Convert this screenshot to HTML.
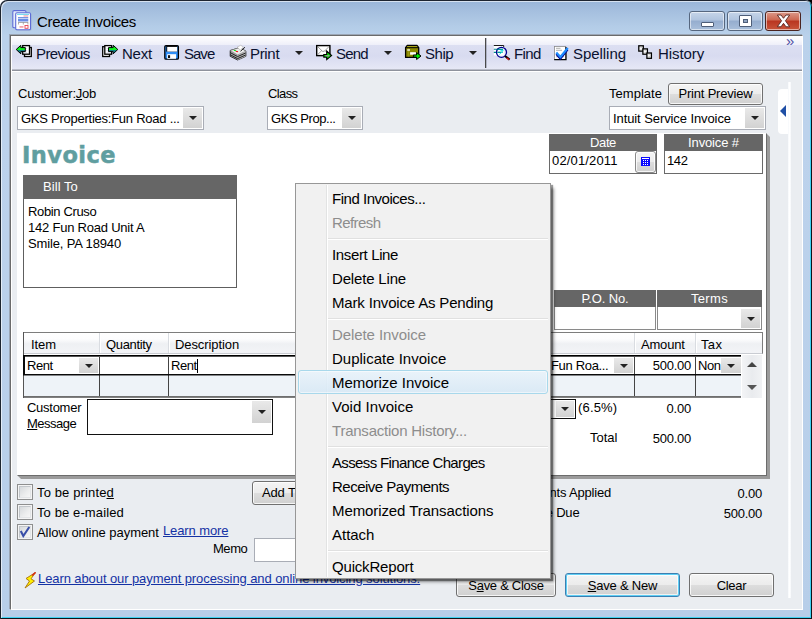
<!DOCTYPE html>
<html>
<head>
<meta charset="utf-8">
<title>Create Invoices</title>
<style>
html,body{margin:0;padding:0;}
body{width:812px;height:619px;overflow:hidden;position:relative;background:#fff;font-family:"Liberation Sans",sans-serif;font-size:13px;color:#000;}
.abs,.win *{position:absolute;box-sizing:border-box;}
.win{position:absolute;left:0;top:0;width:812px;height:619px;box-sizing:border-box;background:linear-gradient(to bottom,#98b5d8 0,#a6c0df 12px,#b3cce7 26px,#bad1eb 36px,#bcd2ec 130px,#b7cee9 100%);box-shadow:inset 1px 1px 0 0 #1d2530,inset -1px -1px 0 0 #10141a,inset 2px 2px 0 0 rgba(255,255,255,.6),inset -2px -2px 0 0 #3fd2f2;border-radius:7px 7px 0 0;overflow:hidden;}
.t{white-space:nowrap;line-height:16px;height:16px;font-size:13px;}
.n{font-size:13px;}
u{text-decoration:underline;}
.win u{position:static;}
/* title */
.title{left:37px;top:13px;font-size:15px;line-height:18px;color:#000;white-space:nowrap;}
.cap{top:11px;height:20px;border:1px solid #56677f;border-radius:3px;background:linear-gradient(to bottom,#c6d5e9 0,#b0c4de 45%,#95adce 50%,#a9bfdb 100%);box-shadow:inset 0 0 0 1px rgba(255,255,255,.55);}
.cap.close{background:linear-gradient(to bottom,#dc9a8a 0,#cc6650 45%,#b93520 50%,#c8553a 100%);border-color:#4a2420;}
/* client */
.client{left:10px;top:35px;width:793px;height:575px;background:#eaedf1;border:1px solid #6b6b6b;border-right-color:#fff;border-bottom-color:#fff;box-shadow:-1px -1px 0 #9ba6b5;}
.tb{left:0;top:0;width:791px;height:36px;background:linear-gradient(to bottom,#ffffff 0,#fafafd 3px,#eeeff9 9px,#dcdff2 9px,#d8dbf0 20px,#e6e8f6 33px,#8e929c 34px,#8e929c 35px,#fff 35px);}
.tbt{top:10px;font-size:15px;line-height:18px;color:#0a1230;white-space:nowrap;}
.tbi{top:9px;width:18px;height:18px;}
.dd{width:0;height:0;border-left:4px solid transparent;border-right:4px solid transparent;border-top:4px solid #222;}
/* combos */
.combo{background:#fff;border:1px solid #a9adb6;height:24px;}
.combo .t{left:3px;top:4px;}
.cbtn{background:linear-gradient(to bottom,#e9e9e9,#d2d2d2);}
.cbtn .dd{left:50%;top:50%;margin-left:-4px;margin-top:-2px;}
.btn{border:1px solid #707070;border-radius:3px;background:linear-gradient(to bottom,#f4f4f4 0,#ececec 48%,#dddddd 52%,#d0d0d0 100%);box-shadow:inset 0 0 0 1px rgba(255,255,255,.8);text-align:center;white-space:nowrap;}
.hdr{background:#666;color:#fff;text-align:center;white-space:nowrap;line-height:18px;font-size:13px;}
.fld{background:#fff;border:1px solid #6a6a6a;}
.r{text-align:right;}
.link{color:#1432a4;text-decoration:underline;}
/* menu */
.menu{left:295px;top:183px;width:256px;height:396px;background:#f1f1f1;border:1px solid #979797;box-shadow:2px 2px 1px rgba(0,0,0,.38),4px 4px 3px -1px rgba(0,0,0,.38);}
.menu .gut{left:30px;top:1px;width:1px;height:392px;background:#e2e3e3;border-right:1px solid #fff;width:2px;}
.mi{left:36px;font-size:15px;line-height:20px;height:20px;color:#000;white-space:nowrap;}
.mi.dis{color:#8d8d8d;}
.msep{left:32px;width:220px;height:2px;border-top:1px solid #e0e0e0;border-bottom:1px solid #fff;}
.mhi{left:2px;width:250px;height:24px;border:1px solid #a8d8eb;border-radius:3px;background:linear-gradient(to bottom,rgba(232,243,251,.85),rgba(214,232,246,.85));box-shadow:inset 0 0 0 1px rgba(255,255,255,.5);}
</style>
</head>
<body>
<div style="position:absolute;right:0;top:0;width:8px;height:8px;background:#000"></div>
<div class="win">
  <!-- title bar -->
  <svg style="left:12px;top:9px" width="20" height="22" viewBox="12 9 20 22">
    <rect x="12.800" y="10.600" width="13.200" height="17.200" rx="1.300" fill="#e4ecfb" stroke="#5d6cd6" stroke-width="1.100"/>
    <rect x="16.500" y="13.500" width="15" height="17" rx="1" fill="#8a94b8" opacity=".45"/>
    <rect x="15.700" y="12.700" width="14.800" height="17" rx="1.300" fill="#fff" stroke="#5d6cd6" stroke-width="1.100"/>
    <rect x="17" y="13.800" width="12" height="0.900" fill="#40c8e8"/>
    <rect x="23.500" y="15.300" width="4.800" height="1.300" fill="#f0a8b0"/>
    <rect x="18" y="17.200" width="10.300" height="0.800" fill="#5878d8"/>
    <rect x="18" y="18.600" width="10.300" height="2.900" fill="#6a8ee6"/>
    <path d="M18.200 22.500h10M18.500 22.500v2M23.300 22.500v2M27.900 22.500v2" stroke="#777" stroke-width="0.600" fill="none"/>
    <rect x="19.500" y="26.500" width="4" height="0.900" fill="#e84858"/>
    <rect x="25" y="25.500" width="3" height="2.800" fill="#fff" stroke="#e84858" stroke-width="0.900"/>
  </svg>
  <div class="title" style="letter-spacing:-0.35px;">Create Invoices</div>
  <div class="cap" style="left:689px;width:36px;"><div style="left:11px;top:10px;width:13px;height:5px;background:#fff;border:1px solid #4e5e78;border-radius:1px"></div></div>
  <div class="cap" style="left:727px;width:36px;"><div style="left:11px;top:3px;width:13px;height:12px;background:#fff;border:1px solid #4e5e78;border-radius:1px"></div><div style="left:15px;top:7px;width:5px;height:4px;background:#8fa3c0;border:1px solid #4e5e78"></div></div>
  <div class="cap close" style="left:765px;width:36px;">
    <svg style="left:10px;top:2px" width="15" height="14" viewBox="0 0 17 14" preserveAspectRatio="none"><path d="M1.500 1 L5.700 1 L8.500 4.300 L11.300 1 L15.500 1 L10.700 6.800 L15.500 12.800 L11.300 12.800 L8.500 9.300 L5.700 12.800 L1.500 12.800 L6.300 6.800 Z" fill="#fff" stroke="#5a2a25" stroke-width="1"/></svg>
  </div>

  <div class="client"><div class="in" style="left:-1px;top:-1px;width:793px;height:575px">
    <!-- toolbar -->
    <div class="tb" style="left:1px;top:1px"></div>
    <div style="left:1px;top:1px;width:1px;height:573px;background:#fff"></div>

    <!-- toolbar icons -->
    <svg style="left:5px;top:9px" width="18" height="14" viewBox="15 44 18 14">
      <defs><linearGradient id="ga" x1="0" y1="0" x2="0" y2="1"><stop offset="0.5" stop-color="#10f020"/><stop offset="0.5" stop-color="#0a8080"/></linearGradient></defs>
      <rect x="24.500" y="47.500" width="6.800" height="9" fill="#fff" stroke="#000" stroke-width="1.300"/>
      <rect x="22.700" y="45.600" width="6.800" height="8.600" fill="#fff" stroke="#000" stroke-width="1.300"/>
      <path d="M24 48.500h3M24 50.500h3M24 52.300h3" stroke="#c8cce8" stroke-width="0.700"/>
      <path d="M16.200 49.500 L20.800 45.300 L20.800 47.600 L25.300 47.600 L25.300 51.600 L20.800 51.600 L20.800 53.800 Z" fill="url(#ga)" stroke="#000" stroke-width="1"/>
    </svg>
    <svg style="left:91px;top:9px" width="18" height="14" viewBox="101 44 18 14">
      <rect x="102.700" y="46.700" width="6.800" height="9.800" fill="#fff" stroke="#000" stroke-width="1.300"/>
      <rect x="104.800" y="45.600" width="6.800" height="8.600" fill="#fff" stroke="#000" stroke-width="1.300"/>
      <path d="M106.500 48.500h3M106.500 50.500h3M106.500 52.300h3" stroke="#c8cce8" stroke-width="0.700"/>
      <path d="M117.800 49.500 L113.200 45.300 L113.200 47.600 L108.500 47.600 L108.500 51.600 L113.200 51.600 L113.200 53.800 Z" fill="url(#ga)" stroke="#000" stroke-width="1"/>
    </svg>
    <svg style="left:153px;top:9px" width="17" height="17" viewBox="163 44 17 17">
      <rect x="164.800" y="45.600" width="13.600" height="13.600" rx="1.200" fill="#2f8ef6" stroke="#000" stroke-width="1.300"/>
      <rect x="166.300" y="46" width="11" height="5.600" fill="#000"/>
      <rect x="167.200" y="46.900" width="9.900" height="4.700" fill="#fff"/>
      <rect x="167.200" y="54.200" width="8.800" height="4.600" fill="#fff"/>
      <rect x="168" y="55.200" width="2.100" height="2.800" fill="#111"/>
    </svg>
    <svg style="left:219px;top:9px" width="18" height="17" viewBox="229 44 18 17">
      <path d="M230.200 50.500 L239.900 47.600 L245.900 51.200 L245.900 56.300 L237.600 60 L230.200 56.300 Z" fill="#a6a6a6" stroke="#111" stroke-width="0.800"/>
      <path d="M230.200 50.500 L239.900 47.600 L245.900 51.200 L237.600 54.900 Z" fill="#ececec" stroke="#666" stroke-width="0.500"/>
      <path d="M237.600 54.900 L245.900 51.200 L245.900 56.300 L237.600 60 Z" fill="#b4b4b4"/>
      <path d="M230.200 52.600 L237.600 56.600 L245.900 52.900 M230.200 54.700 L237.600 58.600 L245.900 54.900" fill="none" stroke="#0a0a0a" stroke-width="0.850"/>
      <path d="M237.200 47.100 L240.700 45.300 L243.500 47 L240.400 50.200 Z" fill="#fff" stroke="#999" stroke-width="0.500"/>
      <path d="M245 47.200 L240.500 51.300" stroke="#111" stroke-width="0.900"/>
      <rect x="233.800" y="49.900" width="2.300" height="1.200" fill="#10e020" transform="rotate(14 235 50.500)"/>
      <rect x="235.800" y="50.900" width="2.300" height="1.200" fill="#f01010" transform="rotate(14 237 51.500)"/>
    </svg>
    <svg style="left:305px;top:9px" width="18" height="17" viewBox="315 44 18 17">
      <rect x="317.300" y="46.300" width="13.400" height="10.200" fill="#b8b8b8" opacity=".6"/>
      <rect x="316.700" y="45.600" width="13.200" height="10" fill="#fff" stroke="#000" stroke-width="1.400"/>
      <path d="M318 47 L322.500 51.300 L324.300 51.300 L328.600 47 M318 54.200 L321.800 50.600 M328.600 54.200 L325 50.600" fill="none" stroke="#777" stroke-width="0.700"/>
      <path d="M323.800 54.500 L326.700 54.500 L326.700 51 L331.600 55.500 L326.700 59.600 L326.700 57.100 L323.800 57.100 Z" fill="#00e800" stroke="#000" stroke-width="1.100"/>
      <path d="M325.500 55.800 L329.500 55.800" stroke="#b098b0" stroke-width="1.200"/>
    </svg>
    <svg style="left:394px;top:9px" width="18" height="17" viewBox="404 44 18 17">
      <path d="M405.600 47.600 L407.300 45.400 L417 45.400 L418.700 47.600 L418.700 57.400 L405.600 57.400 Z" fill="#8b8900" stroke="#000" stroke-width="1.300" stroke-linejoin="round"/>
      <path d="M406.400 47.300 L407.700 46.100 L416.600 46.100 L417.900 47.300 Z" fill="#a8a418"/>
      <path d="M405.600 47.700 L418.700 47.700" stroke="#000" stroke-width="1"/>
      <path d="M408.500 48.500 L408.500 56.500" stroke="#9c9a18" stroke-width="0.800"/>
      <rect x="407.200" y="49.300" width="2.800" height="1.400" fill="#f4f4e4"/>
      <rect x="410.100" y="52.200" width="5.800" height="2.500" fill="#fff"/>
      <path d="M413.400 55 L416.600 55 L416.600 52.600 L421 56 L416.600 59.500 L416.600 57.100 L413.400 57.100 Z" fill="#00f000" stroke="#000" stroke-width="1" stroke-linejoin="miter"/>
    </svg>
    <svg style="left:483px;top:9px" width="18" height="17" viewBox="493 44 18 17">
      <rect x="493.800" y="45.200" width="10" height="10.300" fill="#fff"/>
      <path d="M493.800 45.500 L503.700 45.500 L503.700 47" fill="none" stroke="#000" stroke-width="0.900"/>
      <path d="M493.800 49.300 L502.700 49.300 M493.800 52.400 L502.700 52.400" stroke="#008c8c" stroke-width="1.100"/>
      <circle cx="501.500" cy="52.300" r="5" fill="rgba(255,255,255,.55)" stroke="#000090" stroke-width="1.300"/>
      <path d="M497.500 49.300 L503 49.300 M497.500 52.400 L502.500 52.400" stroke="#009a9a" stroke-width="1.300"/>
      <path d="M500.500 50.400 L503.200 50.400 L499.500 54.500" fill="none" stroke="#20e8e8" stroke-width="1"/>
      <path d="M505 56 L509.600 59.600" stroke="#000" stroke-width="2.200"/>
      <path d="M506.600 57.800 L509.200 59.700" stroke="#f01010" stroke-width="1.100"/>
    </svg>
    <svg style="left:543px;top:9px" width="17" height="17" viewBox="553 44 17 17">
      <rect x="554.500" y="46.500" width="11.200" height="13" fill="#fff" stroke="#8a8a8a" stroke-width="0.800"/>
      <path d="M566 47 L566 59.600 L554.200 59.600" fill="none" stroke="#000" stroke-width="1.200"/>
      <path d="M556 48.300 L560.500 48.300 M556 50.300 L562 50.300 M556 56.700 L558 56.700 M562.500 56.700 L564 56.700" stroke="#9a9a9a" stroke-width="0.800"/>
      <path d="M556.300 54 L560.400 58.600 L567.600 49.600" fill="none" stroke="#00008c" stroke-width="2"/>
      <path d="M556.300 52.400 L560.400 57 L567.800 48" fill="none" stroke="#1e8cff" stroke-width="2.200"/>
    </svg>
    <svg style="left:627px;top:9px" width="17" height="17" viewBox="637 44 17 17">
      <g fill="#fff" stroke="#000" stroke-width="1.300">
      <rect x="638.800" y="45.800" width="4.500" height="5.300"/>
      <rect x="642.900" y="48.900" width="4.500" height="5.300"/>
      <rect x="646.900" y="53" width="4.500" height="5.300"/>
      </g>
      <path d="M640.300 47.500h1.600M640.300 49.300h1.600M644.400 50.700h1.600M644.400 52.500h1.600M648.400 54.700h1.600M648.400 56.500h1.600" stroke="#aaa" stroke-width="0.600"/>
    </svg>
    <div class="tbt" style="letter-spacing:-0.58px;left:26px">Previous</div>
    <div class="tbt" style="letter-spacing:-0.21px;left:112px">Next</div>
    <div class="tbt" style="letter-spacing:-0.99px;left:174px">Save</div>
    <div class="tbt" style="letter-spacing:-0.32px;left:240px">Print</div>
    <div class="dd" style="left:285px;top:16px"></div>
    <div class="tbt" style="letter-spacing:-0.82px;left:326px">Send</div>
    <div class="dd" style="left:374px;top:16px"></div>
    <div class="tbt" style="letter-spacing:-0.45px;left:415px">Ship</div>
    <div class="dd" style="left:459px;top:16px"></div>
    <div style="left:475px;top:3px;width:2px;height:30px;background:linear-gradient(to right,#4a4a4a 50%,rgba(120,124,140,.45) 50%)"></div>
    <div class="tbt" style="letter-spacing:-0.61px;left:504px">Find</div>
    <div class="tbt" style="letter-spacing:-0.05px;left:563px">Spelling</div>
    <div class="tbt" style="letter-spacing:-0.06px;left:648px">History</div>
    <div style="left:776px;top:-1px;font-size:15px;line-height:14px;color:#5050a4;letter-spacing:-1px">»</div>

    <!-- top form -->
    <div class="t" style="letter-spacing:-0.24px;left:8px;top:51px">Customer:<u>J</u>ob</div>
    <div class="combo" style="left:7px;top:71px;width:187px"><div class="t" style="letter-spacing:-0.25px;">GKS Properties:Fun Road ...</div><div class="cbtn" style="left:165px;top:1px;width:19px;height:20px"><div class="dd"></div></div></div>
    <div class="t" style="letter-spacing:-0.60px;left:258px;top:51px">Class</div>
    <div class="combo" style="left:257px;top:71px;width:96px"><div class="t" style="letter-spacing:-0.44px;">GKS Prop...</div><div class="cbtn" style="left:74px;top:1px;width:19px;height:20px"><div class="dd"></div></div></div>
    <div class="t" style="letter-spacing:0.03px;left:599px;top:51px">Template</div>
    <div class="btn" style="letter-spacing:-0.20px;left:658px;top:48px;width:95px;height:22px;line-height:20px">Print Preview</div>
    <div class="combo" style="left:599px;top:71px;width:157px"><div class="t" style="letter-spacing:-0.09px;">Intuit Service Invoice</div><div class="cbtn" style="left:135px;top:1px;width:19px;height:20px"><div class="dd"></div></div></div>

    <!-- right tab -->
    <div style="left:768px;top:54px;width:13px;height:45px;background:#fff;border-radius:4px 0 0 4px"></div>
    <div style="left:778px;top:47px;width:3px;height:516px;background:linear-gradient(to right,#f3f6fa,#fff 34%,#fff 66%,#f3f6fa)"></div>
    <div style="left:770px;top:70px;width:0;height:0;border-top:6px solid transparent;border-bottom:6px solid transparent;border-right:6px solid #1f4fa5"></div>

    <!-- white panel -->
    <div style="left:7px;top:98px;width:753px;height:346px;background:#fff;border-right:4px solid #9b9b9b;border-bottom:4px solid #9b9b9b;border-left:1px solid #fff"></div>
    <div style="left:7px;top:440px;width:750px;height:1px;background:#6c6c6c"></div>
    <div style="left:756px;top:98px;width:1px;height:343px;background:#6c6c6c"></div>
    <div style="left:7px;top:440px;width:0;height:0;border-top:4px solid transparent;border-left:4px solid #eaedf1"></div>
    <div style="left:756px;top:98px;width:0;height:0;border-left:4px solid transparent;border-top:4px solid #eaedf1"></div>
    <div style="left:12px;top:106px;font-family:'DejaVu Sans','Liberation Sans',sans-serif;font-weight:bold;font-size:22.5px;line-height:28px;color:#5f9ea0;white-space:nowrap;-webkit-text-stroke:0.5px #5f9ea0;letter-spacing:0.45px;">Invoice</div>

    <!-- bill to -->
    <div class="fld" style="left:13px;top:140px;width:214px;height:113px;border-color:#5e5e5e"></div>
    <div class="hdr" style="letter-spacing:0.06px;left:13px;top:140px;width:214px;height:24px;line-height:24px;text-align:left;padding-left:20px">Bill To</div>
    <div class="t" style="letter-spacing:-0.36px;left:18px;top:169px">Robin Cruso</div>
    <div class="t" style="letter-spacing:-0.22px;left:18px;top:185px">142 Fun Road Unit A</div>
    <div class="t" style="letter-spacing:-0.14px;left:18px;top:201px">Smile, PA 18940</div>

    <!-- date / invoice -->
    <div class="fld" style="left:539px;top:99px;width:108px;height:40px"></div>
    <div class="hdr" style="letter-spacing:-0.37px;left:539px;top:99px;width:108px;height:17px">Date</div>
    <div class="t" style="letter-spacing:0.15px;left:542px;top:118px">02/01/2011</div>
    <div class="btn" style="left:625px;top:116px;width:21px;height:22px;border-color:#8a8a8a">
      <svg style="left:5px;top:5px" width="9" height="9" viewBox="0 0 9 9"><rect x="0" y="0" width="9" height="9" fill="#0a0aff"/><g fill="#fff"><rect x="1" y="1" width="7" height="1"/><rect x="2" y="3" width="1" height="1"/><rect x="4" y="3" width="1" height="1"/><rect x="6" y="3" width="1" height="1"/><rect x="2" y="5" width="1" height="1"/><rect x="4" y="5" width="1" height="1"/><rect x="6" y="5" width="1" height="1"/><rect x="2" y="7" width="1" height="1"/><rect x="4" y="7" width="1" height="1"/><rect x="6" y="7" width="1" height="1"/></g></svg>
    </div>
    <div class="fld" style="left:654px;top:99px;width:99px;height:40px"></div>
    <div class="hdr" style="letter-spacing:-0.14px;left:654px;top:99px;width:99px;height:17px">Invoice #</div>
    <div class="t" style="letter-spacing:-0.37px;left:657px;top:118px">142</div>

    <!-- PO / Terms -->
    <div class="fld" style="left:544px;top:255px;width:102px;height:40px;border-color:#8a8a8a"></div>
    <div class="hdr" style="letter-spacing:-0.15px;left:544px;top:255px;width:102px;height:17px">P.O. No.</div>
    <div class="fld" style="left:647px;top:255px;width:105px;height:40px;border-color:#8a8a8a"></div>
    <div class="hdr" style="letter-spacing:0.32px;left:647px;top:255px;width:105px;height:17px">Terms</div>
    <div class="cbtn" style="left:731px;top:274px;width:19px;height:19px"><div class="dd"></div></div>

    <!-- table -->
    <div style="left:13px;top:297px;width:740px;height:22px;background:linear-gradient(to bottom,#fff 0,#fdfdfe 30%,#eef0f3 55%,#f3f4f7 100%);border:1px solid #7d7d7d;border-bottom-color:#c9ccd2"></div>
    <div style="left:14px;top:319px;width:738px;height:1px;background:#fff"></div>
    <div style="left:14px;top:320px;width:717px;height:20px;background:#fff"></div>
    <div style="left:14px;top:340px;width:717px;height:21px;background:#eef3f8"></div>
    <div style="left:732px;top:320px;width:20px;height:43px;background:linear-gradient(to right,#f3f4f6,#e9ebee 50%,#f1f2f4)"></div>
    <div style="left:13px;top:361px;width:718px;height:2px;background:linear-gradient(to bottom,#666,#888)"></div>
    <div style="left:13px;top:297px;width:1px;height:66px;background:#555"></div>
    <!-- col seps -->
    <div style="left:89px;top:298px;width:2px;height:20px;background:linear-gradient(to right,#d9dce1 50%,#fff 50%)"></div>
    <div style="left:158px;top:298px;width:2px;height:20px;background:linear-gradient(to right,#d9dce1 50%,#fff 50%)"></div>
    <div style="left:624px;top:298px;width:2px;height:20px;background:linear-gradient(to right,#d9dce1 50%,#fff 50%)"></div>
    <div style="left:685px;top:298px;width:2px;height:20px;background:linear-gradient(to right,#d9dce1 50%,#fff 50%)"></div>
    <div style="left:89px;top:320px;width:1px;height:41px;background:#444"></div>
    <div style="left:158px;top:320px;width:1px;height:41px;background:#444"></div>
    <div style="left:624px;top:320px;width:1px;height:41px;background:#444"></div>
    <div style="left:685px;top:320px;width:1px;height:41px;background:#444"></div>
    <!-- active row border -->
    <div style="left:13px;top:320px;width:718px;height:20px;border:2px solid #0a0a0a;border-right:0;border-top:1px solid #000;border-bottom-width:1px;box-shadow:0 1px 0 rgba(0,0,0,.45),inset 0 1px 0 #555"></div>
    <div class="t" style="letter-spacing:-0.07px;left:21px;top:302px">Item</div>
    <div class="t" style="letter-spacing:-0.33px;left:96px;top:302px">Quantity</div>
    <div class="t" style="letter-spacing:-0.09px;left:165px;top:302px">Description</div>
    <div class="t" style="letter-spacing:-0.19px;left:631px;top:302px">Amount</div>
    <div class="t" style="letter-spacing:0.36px;left:691px;top:302px">Tax</div>
    <div class="t" style="letter-spacing:-0.47px;left:17px;top:323px">Rent</div>
    <div class="cbtn" style="left:69px;top:323px;width:19px;height:15px"><div class="dd"></div></div>
    <div class="t" style="letter-spacing:-0.47px;left:161px;top:323px">Rent</div>
    <div style="left:187px;top:324px;width:1px;height:14px;background:#000"></div>
    <div class="t" style="letter-spacing:-0.33px;left:541px;top:323px">Fun Roa...</div>
    <div class="cbtn" style="left:604px;top:323px;width:19px;height:15px"><div class="dd"></div></div>
    <div class="t r" style="letter-spacing:-0.24px;left:630px;top:323px;width:51px">500.00</div>
    <div class="t" style="letter-spacing:-0.42px;left:688px;top:323px">Non</div>
    <div class="cbtn" style="left:711px;top:323px;width:20px;height:15px"><div class="dd"></div></div>
    <div style="left:737px;top:327px;width:0;height:0;border-left:5px solid transparent;border-right:5px solid transparent;border-bottom:5px solid #444"></div>
    <div style="left:737px;top:350px;width:0;height:0;border-left:5px solid transparent;border-right:5px solid transparent;border-top:5px solid #555"></div>

    <!-- customer message -->
    <div class="t" style="letter-spacing:-0.27px;left:17px;top:365px">Customer</div>
    <div class="t" style="letter-spacing:-0.50px;left:17px;top:381px"><u>M</u>essage</div>
    <div class="fld" style="left:77px;top:364px;width:186px;height:36px;border-color:#111"></div>
    <div class="cbtn" style="left:242px;top:366px;width:19px;height:22px"><div class="dd"></div></div>

    <!-- tax / total -->
    <div class="fld" style="left:500px;top:364px;width:66px;height:20px;border-color:#111"></div>
    <div class="cbtn" style="left:546px;top:366px;width:18px;height:16px"><div class="dd"></div></div>
    <div class="t" style="letter-spacing:0.17px;left:568px;top:365px">(6.5%)</div>
    <div class="t r" style="letter-spacing:-0.23px;left:630px;top:366px;width:51px">0.00</div>
    <div class="t" style="letter-spacing:0.01px;left:580px;top:395px">Total</div>
    <div class="t r" style="letter-spacing:-0.24px;left:630px;top:396px;width:51px">500.00</div>

    <!-- bottom -->
    <div class="fld" style="left:7px;top:449px;width:16px;height:16px;border-color:#8e8f8f;background:#f4f4f4"><div style="left:1px;top:1px;width:12px;height:12px;border:1px solid #c3c7cb;border-right-color:#e3e5e7;border-bottom-color:#e3e5e7;background:linear-gradient(135deg,#d6d9dc,#eceded 60%,#f6f6f6)"></div></div>
    <div class="fld" style="left:7px;top:469px;width:16px;height:16px;border-color:#8e8f8f;background:#f4f4f4"><div style="left:1px;top:1px;width:12px;height:12px;border:1px solid #c3c7cb;border-right-color:#e3e5e7;border-bottom-color:#e3e5e7;background:linear-gradient(135deg,#d6d9dc,#eceded 60%,#f6f6f6)"></div></div>
    <div class="fld" style="left:7px;top:489px;width:16px;height:16px;border-color:#8e8f8f;background:#f4f4f4"><div style="left:1px;top:1px;width:12px;height:12px;border:1px solid #c3c7cb;border-right-color:#e3e5e7;border-bottom-color:#e3e5e7;background:linear-gradient(135deg,#d6d9dc,#eceded 60%,#f6f6f6)"></div></div>
    <svg style="left:9px;top:491px" width="12" height="12" viewBox="0 0 12 12"><path d="M1.800 5 L4.300 10 L10.300 1" fill="none" stroke="#3a4fa8" stroke-width="2.100"/></svg>
    <div class="t" style="letter-spacing:0.13px;left:27px;top:450px">To be printe<u>d</u></div>
    <div class="t" style="letter-spacing:0.11px;left:27px;top:470px">To be e-mailed</div>
    <div class="t" style="letter-spacing:-0.05px;left:27px;top:490px">Allow online payment</div>
    <div class="t link" style="letter-spacing:-0.11px;left:153px;top:488px">Learn more</div>
    <div class="btn" style="letter-spacing:-0.15px;left:242px;top:446px;width:90px;height:24px;line-height:22px;text-align:left;padding-left:9px">Add Time/Costs...</div>
    <div class="t" style="letter-spacing:-0.46px;left:203px;top:506px">Memo</div>
    <div class="fld" style="left:244px;top:503px;width:200px;height:24px;border-color:#a9adb6"></div>
    <svg style="left:13px;top:537px" width="14" height="17" viewBox="0 0 14 17"><path d="M12.500 0.500 L3 6.500 L6.500 9 L2 16 L11.500 9 L8 6.800 Z" fill="#fff000" stroke="#b07a10" stroke-width="1"/><path d="M12.500 0.500 L9 3.500" stroke="#d82818" stroke-width="1.6"/></svg>
    <div class="t link" style="letter-spacing:-0.09px;left:28px;top:536px">Learn about our payment processing and online invoicing solutions.</div>

    <div class="t" style="letter-spacing:-0.19px;left:500px;top:450px">Payments Applied</div>
    <div class="t r" style="letter-spacing:-0.23px;left:700px;top:451px;width:52px">0.00</div>
    <div class="t" style="letter-spacing:-0.18px;left:497px;top:470px">Balance Due</div>
    <div class="t r" style="letter-spacing:-0.24px;left:700px;top:471px;width:52px">500.00</div>

    <div class="btn" style="letter-spacing:-0.28px;left:446px;top:538px;width:100px;height:24px;line-height:24px">S<u>a</u>ve &amp; Close</div>
    <div class="btn" style="letter-spacing:-0.19px;left:555px;top:538px;width:115px;height:24px;line-height:24px;border-color:#3c7fb1;box-shadow:inset 0 0 0 1px #5fcff5,inset 0 0 0 2px rgba(255,255,255,.7)"><u>S</u>ave &amp; New</div>
    <div class="btn" style="letter-spacing:-0.28px;left:679px;top:538px;width:85px;height:24px;line-height:24px">Clear</div>
  </div></div>

  <!-- context menu -->
  <div class="menu">
    <div class="gut"></div>
    <div class="mhi" style="top:186px"></div>
    <div class="mi" style="letter-spacing:-0.47px;top:5px">Find Invoices...</div>
    <div class="mi dis" style="letter-spacing:-0.58px;top:29px">Refresh</div>
    <div class="msep" style="top:54px"></div>
    <div class="mi" style="letter-spacing:-0.36px;top:61px">Insert Line</div>
    <div class="mi" style="letter-spacing:-0.17px;top:85px">Delete Line</div>
    <div class="mi" style="letter-spacing:-0.17px;top:109px">Mark Invoice As Pending</div>
    <div class="msep" style="top:134px"></div>
    <div class="mi dis" style="letter-spacing:-0.08px;top:141px">Delete Invoice</div>
    <div class="mi" style="letter-spacing:0.00px;top:165px">Duplicate Invoice</div>
    <div class="mi" style="letter-spacing:-0.03px;top:189px">Memorize Invoice</div>
    <div class="mi" style="letter-spacing:0.04px;top:213px">Void Invoice</div>
    <div class="mi dis" style="letter-spacing:-0.23px;top:237px">Transaction History...</div>
    <div class="msep" style="top:262px"></div>
    <div class="mi" style="letter-spacing:-0.64px;top:269px">Assess Finance Charges</div>
    <div class="mi" style="letter-spacing:-0.50px;top:293px">Receive Payments</div>
    <div class="mi" style="letter-spacing:-0.09px;top:317px">Memorized Transactions</div>
    <div class="mi" style="letter-spacing:-0.02px;top:341px">Attach</div>
    <div class="msep" style="top:366px"></div>
    <div class="mi" style="letter-spacing:-0.18px;top:373px">QuickReport</div>
  </div>
</div>
</body>
</html>
